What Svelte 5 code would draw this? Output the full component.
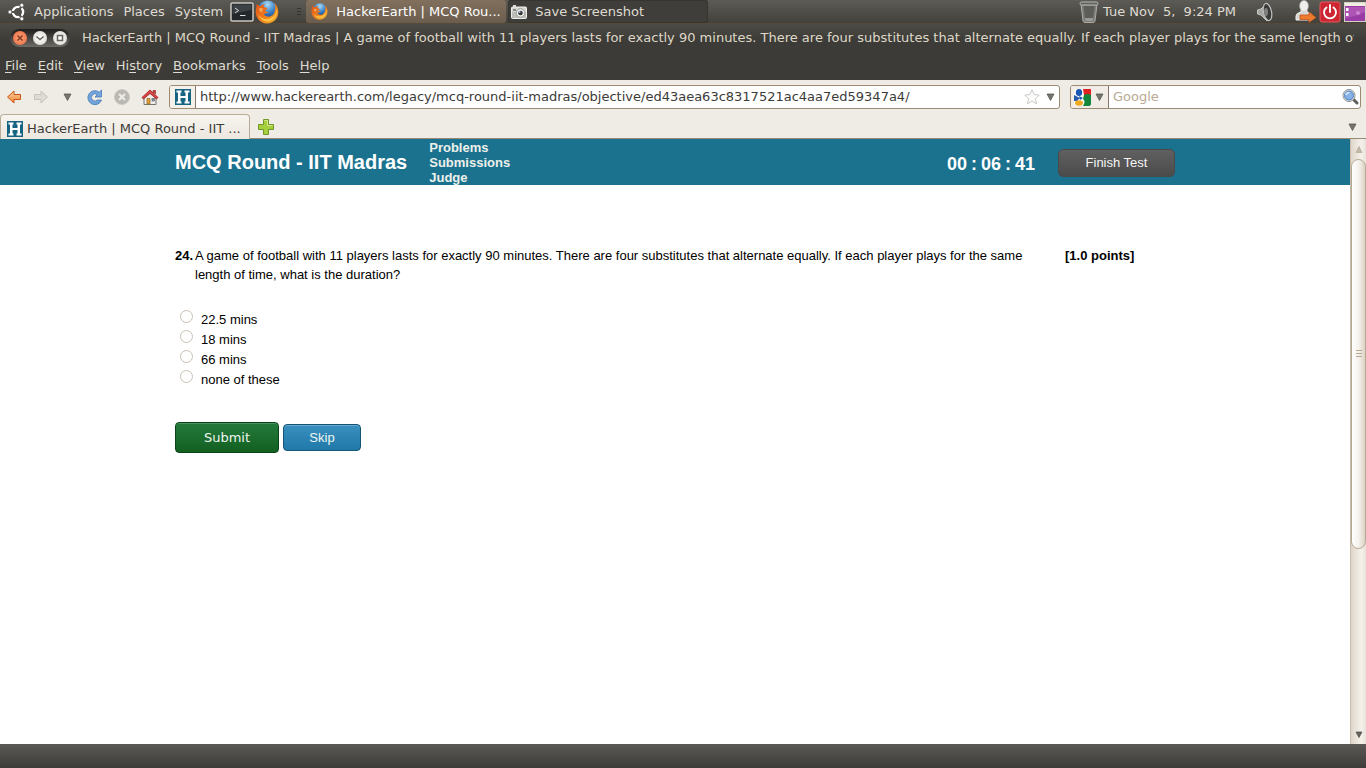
<script>
  const menus = [['', 'F', 'ile'], ['', 'E', 'dit'], ['', 'V', 'iew'], ['Hi', 's', 'tory'], ['', 'B', 'ookmarks'], ['', 'T', 'ools'], ['', 'H', 'elp']];
  const options = ['22.5 mins', '18 mins', '66 mins', 'none of these'];
  const title = 'HackerEarth | MCQ Round - IIT Madras | A game of football with 11 players lasts for exactly 90 minutes. There are four substitutes that alternate equally. If each player plays for the same length of';
  let url = $state('http://www.hackerearth.com/legacy/mcq-round-iit-madras/objective/ed43aea63c8317521ac4aa7ed59347a4/');
  let query = $state('');
  let answer = $state(null);
</script>

{#snippet firefox(size)}
  <svg width={size} height={size} viewBox="0 0 24 24" aria-hidden="true">
    <defs>
      <radialGradient id="globe" cx=".5" cy=".2" r=".8"><stop offset="0" stop-color="#a9dcf5" /><stop offset=".5" stop-color="#3b82c8" /><stop offset="1" stop-color="#102f74" /></radialGradient>
      <linearGradient id="fur" x1="0" y1="0" x2="1" y2="1"><stop offset="0" stop-color="#e0521a" /><stop offset=".5" stop-color="#ef7a1c" /><stop offset="1" stop-color="#f8b92c" /></linearGradient>
    </defs>
    <circle cx="12.500" cy="10.500" r="10" fill="url(#globe)" />
    <path d="M2 3.500C1.500 6 1 8 .7 11.500C.7 18.500 5.500 23.500 12 23.500C18.500 23.500 23.300 18.500 23.300 12C23.300 8.500 21.800 5 19.500 3C20.500 6 20.400 9 19.700 11.500C18.700 15.200 15.900 17 12.800 16.600C10.600 16.300 9 15.200 8.700 13.500C10 14 11.500 13.500 14 12C12 12 11 11.300 10.200 10.400L12.500 8.700C11.500 7.400 9.800 7 8.700 6.900C8.900 5.700 9.300 4.900 10.200 4.200C7.700 4.100 6.300 5.100 5.300 6.100C4 6.100 3 5.200 2 3.500Z" fill="url(#fur)" />
    <path d="M21.800 7.500C22 14 18 18.800 12.500 19.200C8 19.200 5 17.500 3.500 14.500C5 19.500 9 21.600 13 21.400C19 21 23 15 21.800 7.500Z" fill="#fbc444" />
    <path d="M4 9Q5 7.300 8 8.500L7 12Q4.500 12.500 4 9Z" fill="#f6a653" />
  </svg>
{/snippet}

{#snippet hicon()}
  <svg width="16" height="16" viewBox="0 0 16 16" aria-hidden="true">
    <rect width="16" height="16" fill="#156484" />
    <path d="M1.500 1.500H6.500V3.500H5.500V7H10.500V3.500H9.500V1.500H14.500V3.500H13V12.500H14.500V14.500H9.500V12.500H10.500V9H5.500V12.500H6.500V14.500H1.500V12.500H3V3.500H1.500Z" fill="#fff" />
  </svg>
{/snippet}

{#snippet arrow()}
  <svg width="9" height="8" viewBox="0 0 9 8" aria-hidden="true"><path d="M1 1H8L4.500 7.500Z" fill="#77756f" stroke="#4c4b47" stroke-width=".7" /></svg>
{/snippet}

<div class="desktop">
  <header class="panel">
    <nav class="system" aria-label="Desktop">
      <svg class="ubuntu" width="18" height="18" viewBox="0 0 18 18" aria-hidden="true">
        <circle cx="10" cy="9" r="5" fill="none" stroke="#fff" stroke-width="2.600" />
        <path d="M10 9L1 9M10 9L14.500 1.200M10 9L14.500 16.800" stroke="#504f4a" stroke-width="2.200" />
        <circle cx="10" cy="9" r="3.700" fill="#504f4a" />
        <g fill="#fff" stroke="#504f4a" stroke-width=".8"><circle cx="2" cy="9" r="2" /><circle cx="13.800" cy="2.200" r="2" /><circle cx="13.800" cy="15.800" r="2" /></g>
      </svg>
      <button>Applications</button>
      <button>Places</button>
      <button>System</button>
    </nav>
    <div class="launchers">
      <svg width="24" height="22" viewBox="0 0 24 22" aria-hidden="true"><rect x="1" y="2" width="22" height="18" rx="1" fill="#22272b" stroke="#c9c9c4" stroke-width="1.500" /><path d="M2.500 3.500H21.500V9L2.500 13Z" fill="#3c4146" /><path d="M5 7L8.500 9.500L5 12M10 14.500H15.500" fill="none" stroke="#ddd" /></svg>
      {@render firefox(24)}
    </div>
    <svg class="grip" width="5" height="10" viewBox="0 0 5 10" aria-hidden="true"><path d="M0 1.500H4M0 4.500H4M0 7.500H4" stroke="#34332f" /></svg>
    <div class="windows">
      <button class="task current">{@render firefox(17)}<span>HackerEarth | MCQ Rou...</span></button>
      <button class="task">
        <svg width="16" height="16" viewBox="0 0 16 16" aria-hidden="true"><rect x=".5" y="3" width="15" height="11.500" rx="1" fill="#d6d6d2" stroke="#efefec" /><rect x="2" y="1" width="3" height="2" fill="#ddd" /><path d="M1 8H15V14H1Z" fill="#bdbdb8" /><circle cx="9.500" cy="9" r="4.300" fill="#ecece8" stroke="#999" /><circle cx="9.500" cy="9" r="2.300" fill="#30343b" /><circle cx="8.700" cy="8" r=".9" fill="#afc3d4" /><rect x="2" y="5" width="3" height="2" fill="#868682" /></svg>
        <span>Save Screenshot</span>
      </button>
    </div>
    <div class="tray">
      <svg width="20" height="22" viewBox="0 0 20 22" aria-hidden="true"><path d="M2 3L4 20Q4.500 21.500 6 21.500H14Q15.500 21.500 16 20L18 3Z" fill="#7b7b78" stroke="#aaa9a5" /><path d="M4.500 5L6 17H14L15.500 5Z" fill="#5c5c59" /><path d="M6 17L6.500 20H13.500L14 17Z" fill="#999996" /><rect x="1" y="1" width="18" height="3" rx="1.500" fill="#62625f" stroke="#b8b8b4" /></svg>
      <time>Tue Nov&nbsp; 5,&nbsp; 9:24 PM</time>
      <svg class="sound" width="18" height="20" viewBox="0 0 18 20" aria-hidden="true"><path d="M1.500 8L5 7L11 1V19L5 13L1.500 12Z" fill="#a5a6a3" stroke="#c8c8c5" /><ellipse cx="11.500" cy="10" rx="4" ry="8.700" transform="rotate(-12 11.500 10)" fill="#3b3c3a" stroke="#c0c1be" stroke-width="1.200" /><ellipse cx="10" cy="10" rx="2" ry="4" fill="#80817e" /></svg>
      <svg class="user" width="22" height="23" viewBox="0 0 22 23" aria-hidden="true"><path d="M1 20V16Q1 13 6 12V10H12V12Q17 13 17 16V20Z" fill="#d7d8d5" stroke="#f2f2ef" /><ellipse cx="9" cy="6" rx="4.300" ry="5.500" fill="#eeeeec" stroke="#c5c5c0" stroke-width=".7" /><path d="M5 15H14V12L21 17.500L14 22.500V19.500H5Z" fill="#ef7b2e" stroke="#c35016" stroke-width=".8" /></svg>
      <svg width="22" height="22" viewBox="0 0 22 22" aria-hidden="true"><rect x="1" y="1" width="20" height="20" rx="2" fill="#cd2632" stroke="#e75a60" /><path d="M7.500 6.500A6 6 0 1 0 14.500 6.500M11 4V11" fill="none" stroke="#fff" stroke-width="1.900" stroke-linecap="round" /></svg>
      <svg width="22" height="20" viewBox="0 0 22 20" aria-hidden="true"><rect x=".5" y=".5" width="21" height="19" fill="#9a3ca6" stroke="#d5d3c9" /><rect x="1" y="1" width="20" height="3" fill="#f0eee0" /><path d="M1 5H21V10Q10 15 1 16Z" fill="#ad54b5" /><path d="M2 6H4.500V9H2ZM2 11H4.500V14H2Z" fill="#fff" /><circle cx="14" cy="11" r="2" fill="#cc83cf" /></svg>
    </div>
  </header>

  <div class="titlebar">
    <div class="controls">
      <button class="close" aria-label="Close"><svg width="14" height="14" viewBox="0 0 14 14"><path d="M4.500 4.500L9.500 9.500M9.500 4.500L4.500 9.500" stroke="#7e3b22" stroke-width="1.500" /></svg></button>
      <button aria-label="Minimize"><svg width="14" height="14" viewBox="0 0 14 14"><path d="M3.500 5.500L7 8.500L10.500 5.500" fill="none" stroke="#65645f" stroke-width="1.500" /></svg></button>
      <button aria-label="Maximize"><svg width="14" height="14" viewBox="0 0 14 14"><rect x="4.500" y="4.500" width="5" height="5" fill="none" stroke="#65645f" stroke-width="1.500" /></svg></button>
    </div>
    <span class="title">{title}</span>
  </div>

  <nav class="menubar" aria-label="Browser">
    {#each menus as [before, key, after]}<button>{before}<u>{key}</u>{after}</button>{/each}
  </nav>

  <div class="toolbar">
    <div class="buttons">
      <button aria-label="Back"><svg width="16" height="16" viewBox="0 0 16 16"><defs><linearGradient id="orange" x2="0" y2="1"><stop stop-color="#fbd0a0" /><stop offset="1" stop-color="#f28637" /></linearGradient></defs><path d="M1.500 8L8 2V5.500H14.500V10.500H8V14Z" fill="url(#orange)" stroke="#c75516" stroke-linejoin="round" /></svg></button>
      <button aria-label="Forward" disabled><svg width="16" height="16" viewBox="0 0 16 16"><path d="M14.500 8L8 2V5.500H1.500V10.500H8V14Z" fill="#dedbd5" stroke="#c6c3bd" stroke-linejoin="round" /></svg></button>
      <button class="recent" aria-label="Recent pages">{@render arrow()}</button>
      <button aria-label="Reload"><svg width="16" height="16" viewBox="0 0 16 16"><path d="M14.500 1V8H8L10.300 5.700A3.600 3.600 0 1 0 10.500 11H14.500A7 7 0 1 1 12.300 3.200Z" fill="#72a5dc" stroke="#4379b8" stroke-width=".8" stroke-linejoin="round" /></svg></button>
      <button aria-label="Stop" disabled><svg width="16" height="16" viewBox="0 0 16 16"><circle cx="8" cy="8" r="7.500" fill="#bab8b3" stroke="#cbc8c2" /><path d="M5 5L11 11M11 5L5 11" stroke="#efebe5" stroke-width="2.200" /></svg></button>
      <button aria-label="Home"><svg width="18" height="17" viewBox="0 0 18 17"><path d="M3 8V15.500H15V8L9 3Z" fill="#f0efeb" stroke="#777570" /><path d="M12 1.500H14.500V5L12 3Z" fill="#c94440" stroke="#8e1a1a" stroke-width=".6" /><path d="M1 8.500L9 1L17 8.500L15.500 10L9 4.500L2.500 10Z" fill="#d64644" stroke="#9f1b1b" stroke-width=".8" stroke-linejoin="round" /><path d="M6 9.500H9V15H6Z" fill="#e2a33b" stroke="#8f6015" stroke-width=".7" /><rect x="11" y="9.500" width="2.500" height="2.500" fill="#8799ad" stroke="#555" stroke-width=".6" /></svg></button>
    </div>
    <div class="address">
      <span class="site">{@render hicon()}</span>
      <input type="text" aria-label="Address" bind:value={url} />
      <svg class="star" width="16" height="16" viewBox="0 0 16 16" aria-hidden="true"><path d="M8 .8L10.100 5.600L15.300 6.100L11.400 9.600L12.500 14.900L8 12.100L3.500 14.900L4.600 9.600L.7 6.100L5.900 5.600Z" fill="#fdfdfc" stroke="#cbc9c5" /></svg>
      <button aria-label="Show history">{@render arrow()}</button>
    </div>
    <div class="search">
      <button class="engine" aria-label="Search engine">
        <svg width="17" height="17" viewBox="0 0 17 17" aria-hidden="true"><rect x=".5" y=".5" width="16" height="16" fill="#fff" /><path d="M9 0H17V6H10Z" fill="#e22222" /><path d="M10 6Q13 4 17 6V15Q17 17 14 17H9Q12 12 9 10Z" fill="#14863b" /><path d="M0 6L6 9L3 12H0Z" fill="#285aae" /><ellipse cx="5" cy="3.500" rx="3.200" ry="3.500" fill="#1856b4" /><path d="M5 7L9 9L6 11Z" fill="#1856b4" /><ellipse cx="5" cy="14" rx="4" ry="2.800" fill="#efaa20" /></svg>
        {@render arrow()}
      </button>
      <input type="text" aria-label="Search" placeholder="Google" bind:value={query} />
      <button aria-label="Go"><svg width="18" height="18" viewBox="0 0 18 18"><path d="M11 11L15 15" stroke="#5d5d5a" stroke-width="3" stroke-linecap="round" /><circle cx="7" cy="7.500" r="6" fill="#eee" stroke="#8f8f8c" /><circle cx="7" cy="7.500" r="4.500" fill="#86b2e8" stroke="#4c7dbd" /><path d="M4 7Q4.500 4.500 7.500 4.500" fill="none" stroke="#d9eaff" stroke-width="1.500" /></svg></button>
    </div>
  </div>

  <div class="tabs">
    <button class="tab">{@render hicon()}<span>HackerEarth | MCQ Round - IIT ...</span></button>
    <button class="new" aria-label="New tab"><svg width="16" height="16" viewBox="0 0 16 16"><path d="M5.500 .5H10.500V5.500H15.500V10.500H10.500V15.500H5.500V10.500H.5V5.500H5.500Z" fill="#a6cf3e" stroke="#709626" stroke-linejoin="round" /><path d="M6.500 1.500H9.500V6.500H14.500" fill="none" stroke="#cee68c" /></svg></button>
    <div class="fill"><button aria-label="List all tabs">{@render arrow()}</button></div>
  </div>

  <div class="viewport">
    <div class="page">
      <header class="banner">
        <div class="container">
          <h1>MCQ Round - IIT Madras</h1>
          <nav aria-label="Test"><a href="#problems">Problems</a><a href="#submissions">Submissions</a><a href="#judge">Judge</a></nav>
          <div class="timer"><span>00</span><span>:</span><span>06</span><span>:</span><span>41</span></div>
          <button class="finish">Finish Test</button>
        </div>
      </header>
      <main class="container">
        <form onsubmit={(e) => e.preventDefault()}>
          <div class="question">
            <b class="number">24.</b>
            <p id="question">A game of football with 11 players lasts for exactly 90 minutes. There are four substitutes that alternate equally. If each player plays for the same length of time, what is the duration?</p>
            <b>[1.0 points]</b>
          </div>
          <div class="options" role="radiogroup" aria-labelledby="question">
            {#each options as option}
              <label><input type="radio" name="answer" value={option} bind:group={answer} /><span>{option}</span></label>
            {/each}
          </div>
          <div class="actions"><button class="submit">Submit</button><button type="button" class="skip">Skip</button></div>
        </form>
      </main>
    </div>
    <div class="scrollbar" aria-hidden="true">
      <svg width="8" height="20" viewBox="0 0 8 20"><path d="M1 13.500H7L4 7.500Z" fill="#c2b9aa" stroke="#b3a894" stroke-width=".7" /></svg>
      <div class="track"><div class="thumb"><i></i><i></i><i></i></div></div>
      <svg width="8" height="20" viewBox="0 0 8 20"><path d="M1 8H7L4 13.500Z" fill="#66645f" stroke="#4c4b47" stroke-width=".7" /></svg>
    </div>
  </div>
  <footer></footer>
</div>

<style>
  :global(body) { margin: 0; }
  button, input { font: inherit; color: inherit; margin: 0; }
  button { border: 0; padding: 0; background: none; white-space: nowrap; }
  svg { display: block; flex: none; }
  .desktop { min-height: 100vh; display: flex; flex-direction: column; overflow: hidden; background: #efebe5; color: #3c3b37; font: 13px/16px "DejaVu Sans", sans-serif; }
  .panel { height: 24px; box-sizing: border-box; display: flex; align-items: center; background: linear-gradient(#5c5b56, #42413c); border-bottom: 1px solid #55493a; color: #dfdbd2; }
  .system { display: flex; align-items: center; gap: 10px; padding: 0 7px 0 8px; }
  .ubuntu { margin-right: -2px; }
  .launchers { display: flex; align-items: center; gap: 1px; }
  .grip { margin: 0 4px 0 18px; }
  .windows { display: flex; flex: 1; gap: 2px; align-self: stretch; min-width: 0; }
  .task { display: flex; align-items: center; gap: 8px; width: 200px; padding: 0 5px; border-radius: 3px; background: #3f3e3a; box-shadow: inset 0 0 0 1px #363530; text-align: left; }
  .task + .task { padding-left: 3px; }
  .task.current { background: linear-gradient(#82705d, #6b5d4e); box-shadow: none; color: #fff; }
  .tray { display: flex; align-items: center; gap: 3px; }
  .tray time { margin: 0 17px 0 1px; }
  .sound { margin-right: 18px; }
  .user { margin-right: -1px; }
  .titlebar { display: flex; align-items: center; gap: 12px; height: 28px; padding: 0 12px 0 10px; background: linear-gradient(#4c4b45, #3c3b37 60%); color: #dfd8c8; }
  .controls { display: flex; gap: 6px; height: 18px; box-sizing: border-box; align-items: center; padding: 0 3px; border-radius: 9px; background: linear-gradient(#1f1e1c, #6c6b65); }
  .controls button { border-radius: 7px; background: radial-gradient(#fff, #d4d2cb); }
  .controls .close { background: radial-gradient(#ffa47c, #e8663a); }
  .title { flex: 1; min-width: 0; overflow: hidden; white-space: nowrap; }
  .menubar { height: 28px; display: flex; align-items: center; gap: 11px; padding: 0 5px; background: #3c3b37; color: #dfdbd2; }
  u { text-underline-offset: 2px; }
  .toolbar { display: flex; align-items: center; gap: 10px; height: 34px; padding: 0 5px 0 6px; background: #efebe5; }
  .buttons { display: flex; align-items: center; gap: 11px; }
  .buttons .recent { margin: 0 4px 0 3px; }
  .address, .search { display: flex; align-items: center; height: 24px; box-sizing: border-box; border: 1px solid #9c8a72; border-radius: 3px; background: #fff; overflow: hidden; }
  .address { flex: 1; min-width: 0; }
  .search { width: 291px; }
  .site { padding: 3px 4px 3px 5px; border-right: 1px solid #85786a; background: #f4f1eb; }
  input[type="text"] { flex: 1; min-width: 0; border: 0; outline: 0; padding: 0 4px; background: transparent; color: #3c3b37; }
  input::placeholder { color: #b9aa93; opacity: 1; }
  .star { margin-right: 6px; }
  .address button { margin-right: 4px; }
  .engine { display: flex; align-items: center; gap: 4px; height: 22px; padding: 0 4px 0 3px; background: #f1ede6; border-right: 1px solid #85786a; }
  .tabs { display: flex; height: 25px; background: #efebe5; }
  .tab { display: flex; align-items: center; gap: 4px; width: 250px; box-sizing: border-box; padding: 4px 6px 0; border: 1px solid #b9ad9a; border-bottom: 0; border-radius: 4px 4px 0 0; background: linear-gradient(#f7f4ef, #ece7df); text-align: left; }
  .new { border-bottom: 1px solid #998873; padding: 2px 8px 0; }
  .fill { flex: 1; display: flex; justify-content: flex-end; align-items: center; padding: 2px 9px 0 0; border-bottom: 1px solid #998873; }
  .viewport { flex: 1; display: flex; background: #fff; }
  .page { flex: 1; min-width: 0; color: #000; font-family: "Liberation Sans", sans-serif; font-size: 13px; }
  .banner { background: #1b728f; color: #fff; }
  .container { max-width: 1000px; margin: 0 auto; }
  .banner .container { display: flex; align-items: center; height: 46px; }
  h1 { margin: 0; font-size: 20px; line-height: 24px; }
  .banner nav { display: flex; flex-direction: column; margin: 0 auto 0 22px; font-weight: 700; line-height: 15px; }
  .banner a { color: #eef0ea; text-decoration: none; }
  .timer { display: flex; gap: 4px; margin: 4px 23px 0 0; font-size: 18px; font-weight: 700; }
  .finish { width: 117px; height: 28px; margin-top: 2px; border: 1px solid #4a4a4a; border-radius: 5px; background: linear-gradient(#606060, #4b4b4b); color: #f4f4f4; }
  main { padding-top: 61px; }
  .question { display: flex; line-height: 19px; }
  .question p { width: 850px; margin: 0 20px 0 0; }
  .number { width: 20px; }
  .options { display: flex; flex-direction: column; margin-top: 25px; line-height: 20px; }
  label { display: flex; align-items: flex-start; gap: 8px; height: 20px; padding-left: 5px; }
  label span { padding-top: 1px; }
  input[type="radio"] { appearance: none; width: 13px; height: 13px; box-sizing: border-box; margin: 1px 0 0; border: 1px solid #c9c0b2; border-radius: 50%; background: #fff; }
  input[type="radio"]:checked { background: radial-gradient(#3c3b37 35%, #fff 40%); }
  .actions { display: flex; align-items: center; gap: 4px; margin-top: 33px; }
  .submit, .skip { border-radius: 4px; color: #eef5f0; }
  .submit { width: 104px; height: 31px; border: 1px solid #0b4318; background: linear-gradient(#237a3b, #136021); box-shadow: inset 0 1px #4b9060; font-family: "DejaVu Sans", sans-serif; }
  .skip { width: 78px; height: 27px; border: 1px solid #155474; background: linear-gradient(#3a8fbe, #2079a9); box-shadow: inset 0 1px #68a9cd; }
  .scrollbar { width: 16px; box-sizing: border-box; display: flex; flex-direction: column; align-items: center; border-left: 1px solid #c7bdac; background: linear-gradient(90deg, #dfd6c9, #f4f1eb 70%, #e8e2d9); }
  .track { flex: 1; align-self: stretch; }
  .thumb { height: 69%; box-sizing: border-box; display: flex; flex-direction: column; align-items: center; justify-content: center; gap: 2px; border: 1px solid #b5a892; border-radius: 8px; background: linear-gradient(90deg, #fff, #f5f2ed 50%, #ddd3c5); }
  .thumb i { width: 6px; height: 1px; background: #b7a88f; }
  footer { height: 24px; background: linear-gradient(#5a5955, #3d3c38); }
</style>
